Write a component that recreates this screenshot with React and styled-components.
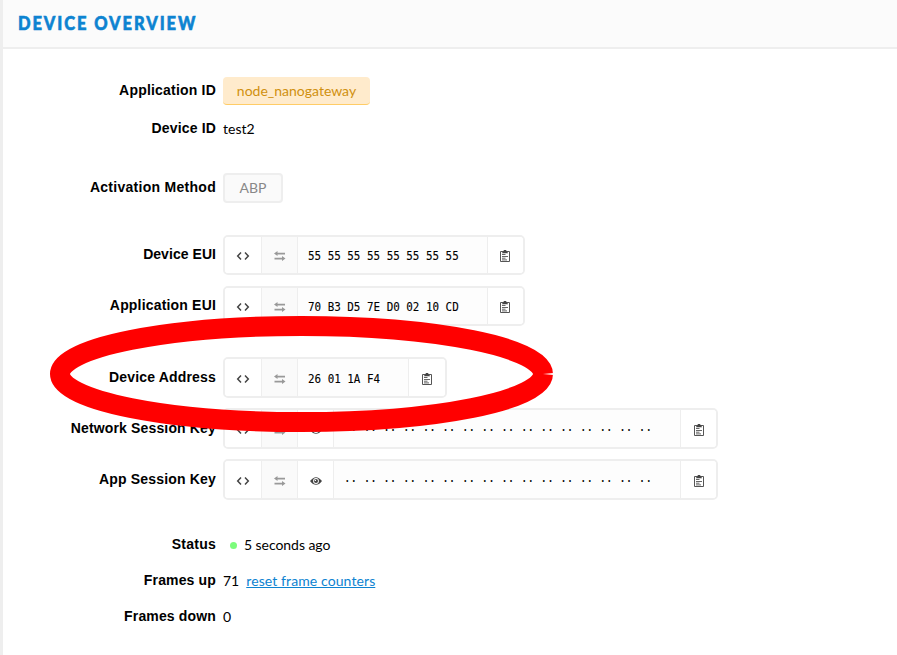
import React from "react";
import styled, { createGlobalStyle } from "styled-components";

const Global = createGlobalStyle`
  * { box-sizing: border-box; }
  body { margin: 0; background: #fff; overflow: hidden; }
`;

const Page = styled.div`
  position: relative;
  width: 897px;
  height: 655px;
  overflow: hidden;
  border-left: 3px solid #eee;
  background: #fff;
  color: #000;
  font-family: Lato, sans-serif;
  font-size: 14px;
`;

const Header = styled.header`
  height: 49px;
  padding: 12px 0 0 15px;
  border-bottom: 2px solid #eee;
  background: #fbfbfb;
`;

const Title = styled.h1`
  margin: 0;
  font: 900 18px/22px Lato, sans-serif;
  letter-spacing: 2.1px;
  color: #0d83d1;
  white-space: nowrap;
  -webkit-text-stroke: 0.6px #0d83d1;
  transform: scaleX(0.915);
  transform-origin: left center;
`;

const Row = styled.div`
  display: flex;
  align-items: flex-start;
  height: ${(p) => p.$h}px;
  margin-top: ${(p) => p.$gap}px;
`;

const Label = styled.div`
  flex: none;
  width: 213px;
  margin: ${(p) => p.$top}px 7px 0 0;
  text-align: right;
  font: bold 14px/18px "Liberation Sans", sans-serif;
  letter-spacing: ${(p) => p.$track || 0.15}px;
  white-space: nowrap;
`;

const Value = styled.div`
  display: flex;
  align-items: center;
  line-height: 20px;
  letter-spacing: ${(p) => p.$track || 0}px;
  white-space: nowrap;
`;

const Chip = styled.span`
  height: 28px;
  width: 147px;
  border-radius: 4px;
  border-bottom: 1px solid #fc6;
  background: #ffebcc;
  color: #d0900f;
  text-align: center;
  line-height: 28px;
`;

const Tag = styled.span`
  width: 60px;
  height: 30px;
  border: 2px solid #eee;
  border-radius: 4px;
  background: #fafafa;
  color: #888;
  text-align: center;
  line-height: 25px;
`;

const Field = styled.div`
  display: flex;
  height: ${(p) => p.$h}px;
  border: 2px solid #eee;
  border-radius: 5px;
  background: #fff;
`;

const Cell = styled.div`
  display: flex;
  align-items: center;
  justify-content: center;
  width: ${(p) => p.$w}px;
  padding-top: 2px;
  border-right: 1px solid #eee;
  background: ${(p) => p.$bg || "#fff"};
  color: ${(p) => p.$fg || "#444"};
  &:first-child { border-radius: 3px 0 0 3px; }
  &:last-child { border-right: 0; border-radius: 0 3px 3px 0; }
`;

const Data = styled(Cell)`
  justify-content: flex-start;
  padding-left: 10px;
`;

const Code = styled.span`
  font: 12px/20px "DejaVu Sans Mono", monospace;
  color: #000;
  white-space: pre;
  -webkit-text-stroke: 0.1px #000;
  transform: scaleX(0.907);
  transform-origin: left center;
`;

const Dot = styled.span`
  width: 7px;
  height: 7px;
  margin: 0 7px;
  border-radius: 50%;
  background: #7cfc7c;
`;

const Link = styled.a`
  margin-left: 7px;
  letter-spacing: 0.1px;
  color: #0d83d1;
  text-decoration: underline;
`;

const Ring = styled.svg`
  position: absolute;
  left: 37px;
  top: 306px;
`;

const Angles = () => (
  <svg width="14" height="10" viewBox="0 0 14 10" fill="none" stroke="currentColor" strokeWidth="1.5">
    <path d="M5 1.5 1.7 5 5 8.5M9 1.5 12.3 5 9 8.5" />
  </svg>
);

const Swap = () => (
  <svg width="12" height="10" viewBox="0 0 12 10" fill="currentColor">
    <path d="M0 2.5 3.5 0v1.7H11v1.7H3.5V5zM11.5 7.5 8 5v1.7H.5v1.7H8V10z" />
  </svg>
);

const Eye = () => (
  <svg width="12" height="8" viewBox="0 0 12 8">
    <path d="M0 4Q6-3.7 12 4Q6 11.7 0 4Z" fill="#444" />
    <circle cx="6" cy="4" r="2.9" fill="#fff" />
    <circle cx="6" cy="4" r="2" fill="#444" />
    <circle cx="5.4" cy="3.4" r=".7" fill="#fff" />
  </svg>
);

const Clipboard = () => (
  <svg width="12" height="14" viewBox="0 0 12 14">
    <path d="M1.5 2.5h9v10h-9z" fill="#fff" stroke="#555" />
    <path d="M3 4.3Q3.2 2.8 4.7 2.5V1h2.6v1.5Q8.8 2.8 9 4.3z" fill="#444" />
    <path d="M3 5.5h3.5M3 7.5h6M3 9.2h3.5M3 10.9h5" stroke="#555" strokeWidth=".9" />
  </svg>
);

const ByteField = ({ h, width, last = 35, secret, children }) => (
  <Field $h={h}>
    <Cell $w={37}><Angles /></Cell>
    <Cell $w={36} $bg="#fafafa" $fg="#999"><Swap /></Cell>
    {secret && <Cell $w={36}><Eye /></Cell>}
    <Data $w={width} $bg="#fdfdfd"><Code>{children}</Code></Data>
    <Cell $w={last}><Clipboard /></Cell>
  </Field>
);

const hidden = Array(16).fill("··").join(" ");

const fields = [
  { label: "Device EUI", gap: 32, h: 40, width: 190, last: 34.5, value: "55 55 55 55 55 55 55 55", track: 0.05 },
  { label: "Application EUI", gap: 11, h: 40, width: 190, last: 34.5, value: "70 B3 D5 7E D0 02 10 CD", track: 0.18 },
  { label: "Device Address", gap: 31, h: 41, width: 111, last: 36, value: "26 01 1A F4", track: 0.18 },
  { label: "Network Session Key", gap: 10, h: 41, width: 347, value: hidden, secret: true },
  { label: "App Session Key", gap: 10, h: 41, width: 347, value: hidden, secret: true, track: 0.18 },
];

export default function App() {
  return (
    <Page>
      <Global />
      <Header><Title>DEVICE OVERVIEW</Title></Header>
      <Row $gap={28} $h={28}>
        <Label $top={4} $track={0.2}>Application ID</Label>
        <Chip>node_nanogateway</Chip>
      </Row>
      <Row $gap={14} $h={20}>
        <Label $top={0}>Device ID</Label>
        <Value>test2</Value>
      </Row>
      <Row $gap={34} $h={30}>
        <Label $top={5} $track={0.28}>Activation Method</Label>
        <Tag>ABP</Tag>
      </Row>
      {fields.map((f) => (
        <Row key={f.label} $gap={f.gap} $h={f.h}>
          <Label $top={f.h - 30} $track={f.track}>{f.label}</Label>
          <ByteField h={f.h} width={f.width} last={f.last} secret={f.secret}>{f.value}</ByteField>
        </Row>
      ))}
      <Row $gap={35} $h={20}>
        <Label $top={0} $track={0.25}>Status</Label>
        <Value $track={-0.05}><Dot />5 seconds ago</Value>
      </Row>
      <Row $gap={16} $h={20}>
        <Label $top={0}>Frames up</Label>
        <Value>71<Link>reset frame counters</Link></Value>
      </Row>
      <Row $gap={16} $h={20}>
        <Label $top={0}>Frames down</Label>
        <Value>0</Value>
      </Row>
      <Ring width="523" height="136" viewBox="40 306 523 136">
        <ellipse cx="301.5" cy="374" rx="241.5" ry="48" fill="none" stroke="#f00" strokeWidth="20" />
        <path d="M543 374 553.5 373v2z" fill="#fff" />
      </Ring>
    </Page>
  );
}
